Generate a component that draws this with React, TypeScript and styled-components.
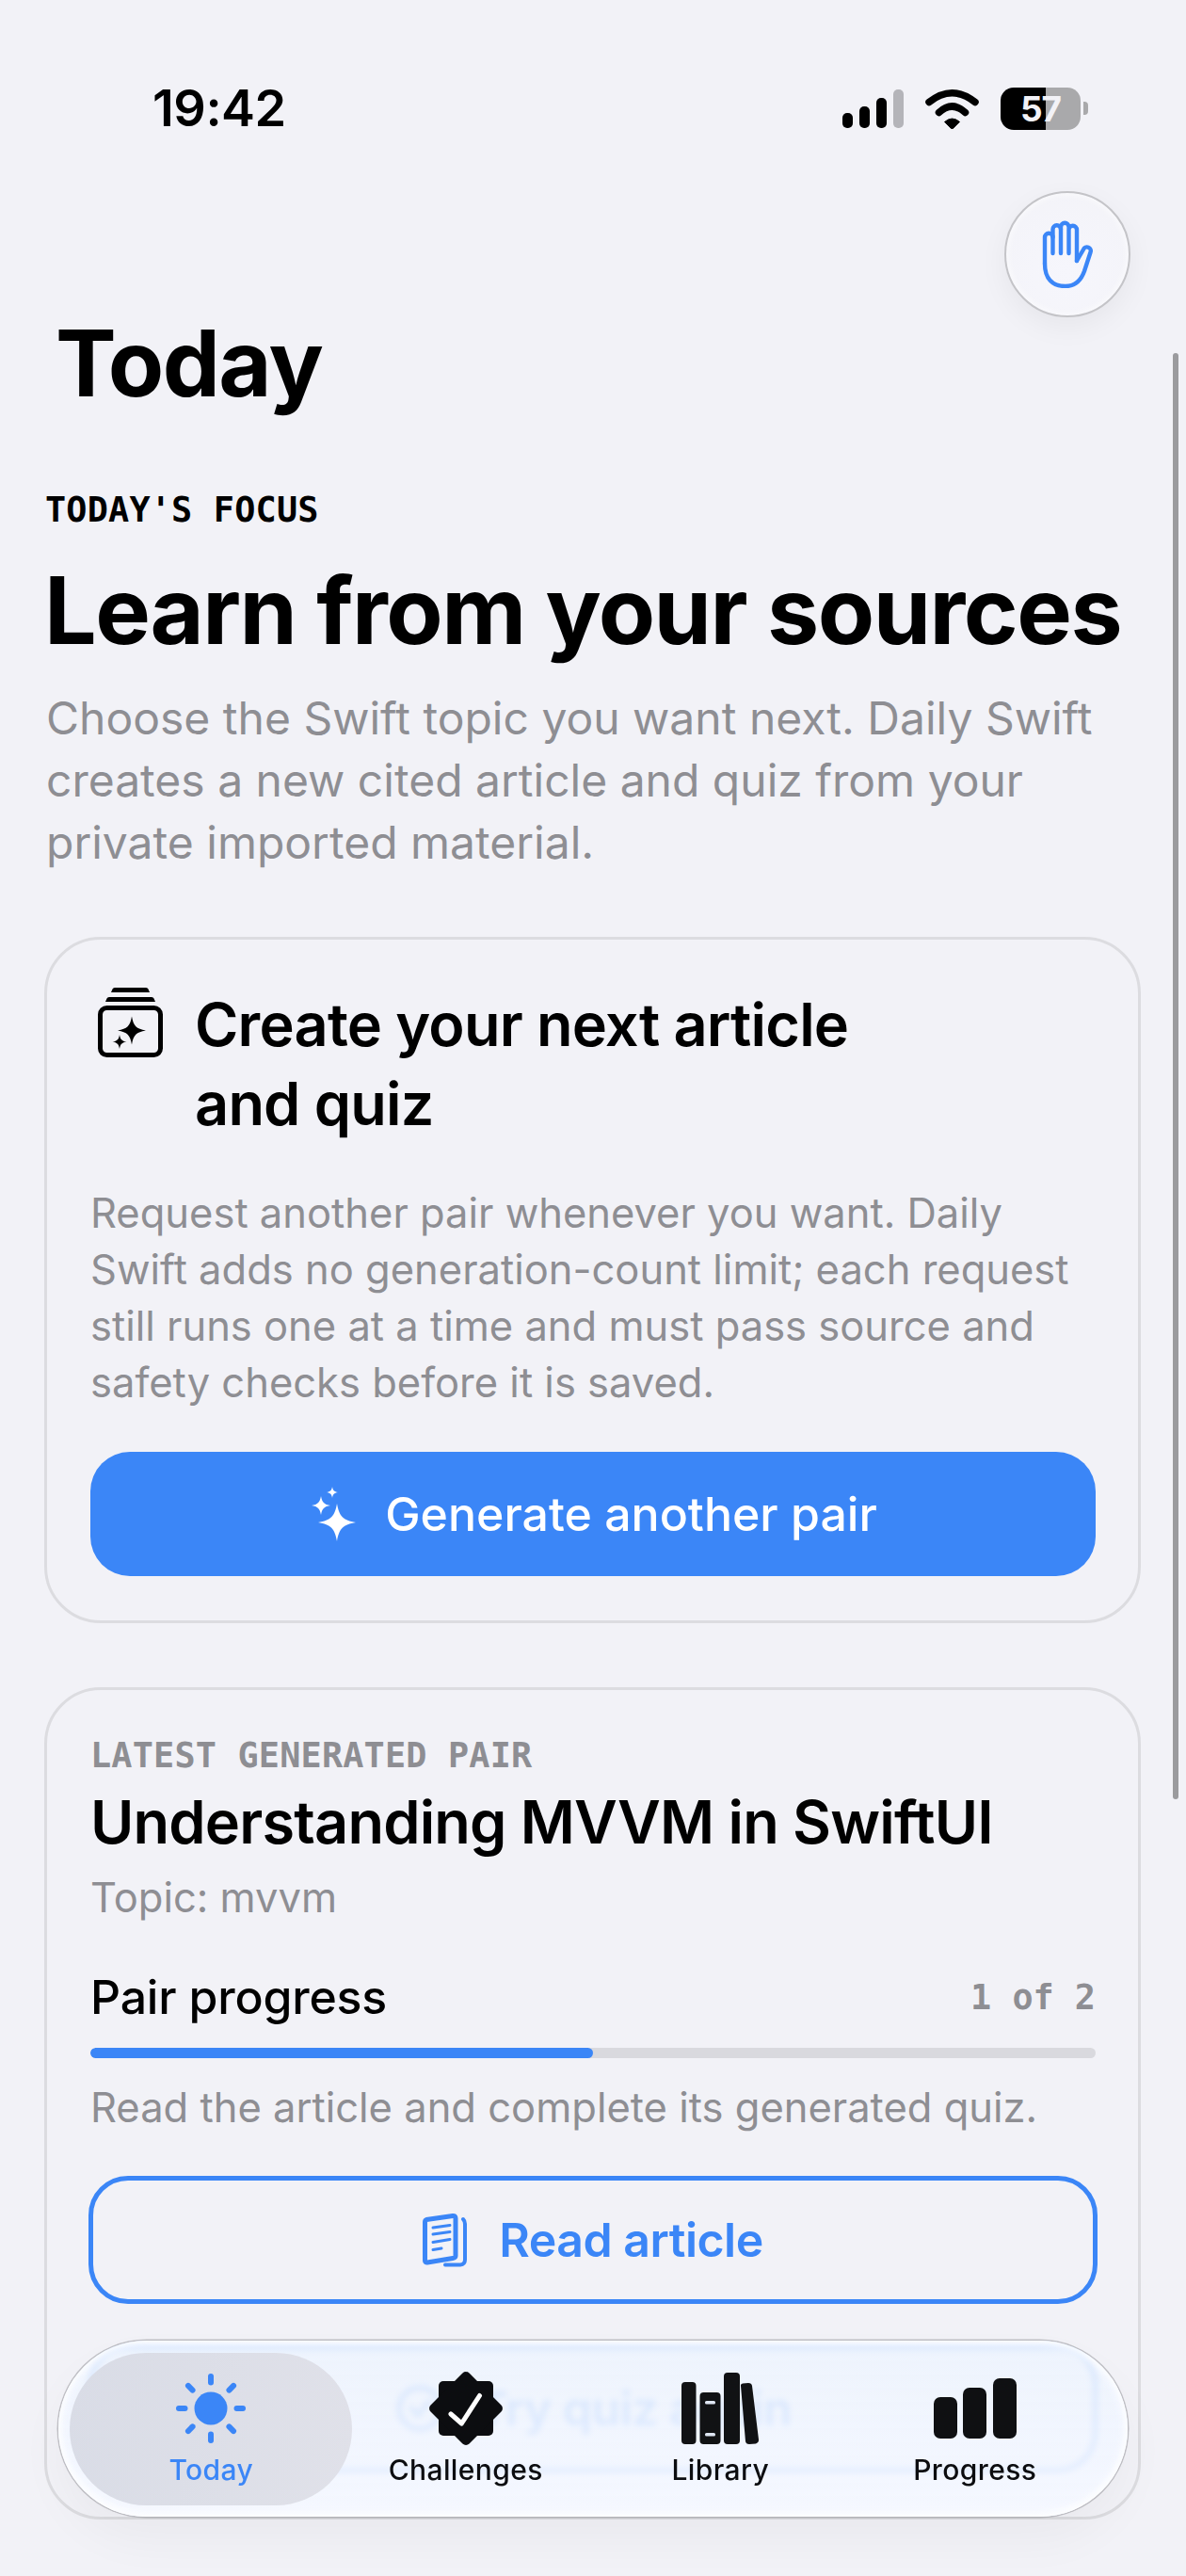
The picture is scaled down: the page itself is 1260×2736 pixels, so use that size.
import React from 'react';
import styled, { createGlobalStyle } from 'styled-components';

const BLUE = '#3b86f7';
const GREY = '#8e8e93';
const MONO = '"DejaVu Sans Mono", "Liberation Mono", monospace';

const GlobalStyle = createGlobalStyle`
	html, body {
		margin: 0;
		padding: 0;
		background: #f2f2f7;
	}
	body {
		font-family: Inter, "Noto Sans", sans-serif;
		-webkit-font-smoothing: antialiased;
	}
`;

const Screen = styled.div`
	position: relative;
	width: 1260px;
	height: 2736px;
	overflow: hidden;
	background: #f2f2f7;
	color: #000;
`;

const StatusBar = styled.header`
	display: flex;
	align-items: center;
	justify-content: space-between;
	height: 62px;
	padding: 84px 104px 0 162px;
`;

const Clock = styled.span`
	font-size: 54px;
	line-height: 62px;
	font-weight: 600;
	letter-spacing: -0.5px;
`;

const StatusIcons = styled.div`
	display: flex;
	align-items: center;
	gap: 23px;
`;

const SignalBars = styled.div`
	display: flex;
	align-items: flex-end;
	gap: 7px;
	height: 42px;
`;

const SignalBar = styled.i<{ $h: number; $off?: boolean }>`
	display: block;
	width: 11px;
	height: ${(p) => p.$h}px;
	border-radius: 5px;
	background: ${(p) => (p.$off ? '#b4b4b9' : '#000')};
`;

const Battery = styled.div`
	display: flex;
	align-items: center;
	gap: 3px;
`;

const BatteryBody = styled.div`
	display: flex;
	align-items: center;
	justify-content: center;
	width: 85px;
	height: 45px;
	border-radius: 14px;
	background: linear-gradient(90deg, #000 0 57%, #a9a9ab 57% 100%);
	color: #f2f2f7;
	font-size: 37px;
	font-weight: 700;
	letter-spacing: -1px;
`;

const BatteryTip = styled.i`
	display: block;
	width: 5px;
	height: 14px;
	border-radius: 0 4px 4px 0;
	background: #a9a9ab;
`;

const HandButton = styled.button`
	position: absolute;
	top: 203px;
	right: 59px;
	display: flex;
	align-items: center;
	justify-content: center;
	width: 134px;
	height: 134px;
	padding: 0;
	border: 2px solid #c4c4c8;
	border-radius: 50%;
	background: radial-gradient(circle at 50% 65%, #f6f6fc 0%, #f3f3f8 100%);
	box-shadow: 0 10px 30px rgba(0, 0, 0, 0.05), inset 0 0 8px rgba(255, 255, 255, 0.9);
`;

const Scrollbar = styled.i`
	position: absolute;
	top: 375px;
	right: 8px;
	width: 6px;
	height: 1536px;
	border-radius: 3px;
	background: rgba(0, 0, 0, 0.36);
`;

const Main = styled.main`
	display: flex;
	flex-direction: column;
	padding: 0 48px 0 47px;
`;

const LargeTitle = styled.h1`
	margin: 180px 0 0 12px;
	font-size: 97px;
	line-height: 120px;
	font-weight: 700;
	letter-spacing: -1.5px;
`;

const Eyebrow = styled.div<{ $muted?: boolean }>`
	font-family: ${MONO};
	font-size: 36.8px;
	line-height: 44px;
	font-weight: 700;
	letter-spacing: 0.2px;
	color: ${(p) => (p.$muted ? GREY : '#000')};
`;

const FocusEyebrow = styled(Eyebrow)`
	margin: 74px 0 0 1px;
`;

const Headline = styled.h2`
	margin: 30px 0 0;
	font-size: 98.6px;
	line-height: 108px;
	font-weight: 700;
	letter-spacing: -1.5px;
	white-space: nowrap;
`;

const Lead = styled.p`
	margin: 28px 0 0 2px;
	font-size: 48px;
	line-height: 66px;
	color: ${GREY};
`;

const Card = styled.section`
	display: flex;
	flex-direction: column;
	margin-top: 67px;
	padding: 48px 45px 47px 46px;
	border: 3px solid #dcdce0;
	border-radius: 60px;
`;

const SecondCard = styled(Card)`
	margin-top: 68px;
	padding-top: 48px;
`;

const CardHeader = styled.div`
	display: flex;
	align-items: flex-start;
	gap: 34px;
	margin-left: 8px;
`;

const HeaderIcon = styled.div`
	margin-top: 3px;
`;

const CardTitle = styled.h3`
	margin: 0;
	font-size: 63px;
	line-height: 84px;
	font-weight: 600;
	letter-spacing: -0.8px;
`;

const CardText = styled.p`
	margin: 44px 0 0;
	font-size: 43.5px;
	line-height: 60px;
	color: ${GREY};
`;

const PrimaryButton = styled.button`
	display: flex;
	align-items: center;
	justify-content: center;
	gap: 30px;
	height: 132px;
	margin-top: 44px;
	padding: 0 0 0 3px;
	border: 0;
	border-radius: 42px;
	background: ${BLUE};
	color: #fff;
	font-family: inherit;
	font-size: 50px;
	font-weight: 500;
`;

const OutlineButton = styled.button`
	display: flex;
	align-items: center;
	justify-content: center;
	gap: 34px;
	height: 136px;
	margin: 0 -2px;
	padding: 0;
	border: 5px solid ${BLUE};
	border-radius: 42px;
	background: transparent;
	color: ${BLUE};
	font-family: inherit;
	font-size: 50px;
	font-weight: 600;
	letter-spacing: -0.5px;
`;

const ReadButton = styled(OutlineButton)`
	margin-top: 43px;
`;

const RetryButton = styled(OutlineButton)`
	margin-top: 43px;
`;

const PairTitle = styled(CardTitle)`
	margin-top: 6px;
`;

const TopicLine = styled.p`
	margin: 8px 0 0;
	font-size: 43.5px;
	line-height: 60px;
	color: ${GREY};
`;

const ProgressRow = styled.div`
	display: flex;
	align-items: center;
	justify-content: space-between;
	margin-top: 44px;
`;

const ProgressLabel = styled.span`
	font-size: 50px;
	line-height: 64px;
	font-weight: 500;
	letter-spacing: -0.2px;
`;

const ProgressCount = styled.span`
	font-family: ${MONO};
	font-size: 36.8px;
	font-weight: 700;
	color: ${GREY};
`;

const Track = styled.div`
	height: 11px;
	margin-top: 22px;
	border-radius: 6px;
	background: #d9d9de;
	overflow: hidden;
`;

const TrackFill = styled.div`
	height: 100%;
	background: ${BLUE};
	border-radius: 6px;
`;

const ProgressHint = styled.p`
	margin: 22px 0 0;
	font-size: 43.5px;
	line-height: 60px;
	color: ${GREY};
`;

const TabBar = styled.nav`
	position: absolute;
	left: 62px;
	top: 2486px;
	display: flex;
	box-sizing: border-box;
	width: 1136px;
	height: 187px;
	padding: 0 27px;
	border-radius: 94px;
	background: linear-gradient(180deg, rgba(236, 243, 254, 0.87), rgba(245, 248, 255, 0.92));
	backdrop-filter: blur(3px);
	box-shadow:
		0 0 0 1.5px rgba(150, 150, 155, 0.55),
		inset 0 0 8px 3px rgba(255, 255, 255, 0.95),
		0 24px 50px rgba(0, 0, 0, 0.04);
`;

const Tab = styled.div<{ $active?: boolean }>`
	position: relative;
	display: flex;
	flex: 1;
	flex-direction: column;
	align-items: center;
	color: ${(p) => (p.$active ? BLUE : '#0c0d10')};

	${(p) =>
		p.$active &&
		`
		&::before {
			content: '';
			position: absolute;
			top: 13px;
			bottom: 12px;
			left: -15px;
			right: -14px;
			border-radius: 81px;
			background: linear-gradient(100deg, #d9dce6, #e0e1e9);
		}
	`}
`;

const TabIcon = styled.div`
	position: relative;
	display: flex;
	align-items: center;
	justify-content: center;
	height: 80px;
	margin-top: 32px;
`;

const TabLabel = styled.span`
	position: relative;
	margin-top: 7px;
	font-size: 30px;
	line-height: 36px;
	font-weight: 500;
	letter-spacing: 0.4px;
`;

const sparklePath = (cx: number, cy: number, r: number) => {
	const a = r * 0.12;
	const b = r * 0.32;
	return `M${cx} ${cy - r}C${cx + a} ${cy - b} ${cx + b} ${cy - a} ${cx + r} ${cy}C${cx + b} ${cy + a} ${cx + a} ${cy + b} ${cx} ${cy + r}C${cx - a} ${cy + b} ${cx - b} ${cy + a} ${cx - r} ${cy}C${cx - b} ${cy - a} ${cx - a} ${cy - b} ${cx} ${cy - r}Z`;
};

function WifiIcon() {
	return (
		<svg width="57" height="43" viewBox="0 0 57 43">
			<path d="M4 14.5Q28.5 -5 53 14.5" fill="none" stroke="#000" strokeWidth="7.5" strokeLinecap="round" />
			<path d="M14.5 25.5Q28.5 12.5 42.5 25.5" fill="none" stroke="#000" strokeWidth="7.5" strokeLinecap="round" />
			<path d="M20.5 35.5Q28.5 28.5 36.5 35.5L29.5 42.5Q28.5 43.2 27.5 42.5Z" fill="#000" stroke="#000" strokeWidth="1" strokeLinejoin="round" />
		</svg>
	);
}

function HandIcon() {
	return (
		<svg width="54" height="72" viewBox="0 0 54 72" fill="none" stroke={BLUE} strokeWidth="4.4" strokeLinecap="round" strokeLinejoin="round">
			<path d="M3 46V18a4.25 4.25 0 0 1 8.5 0" />
			<path d="M11.5 35V9.5a4.25 4.25 0 0 1 8.5 0" />
			<path d="M20 35V7a4.25 4.25 0 0 1 8.5 0" />
			<path d="M28.5 35V10a4.25 4.25 0 0 1 8.5 0V43" />
			<path d="M37 43L44 31a4 4 0 0 1 7.5 3L45 54C41 65 34 70 25 70C11 70 3 62 3 46" />
		</svg>
	);
}

function StackSparkleIcon() {
	return (
		<svg width="69" height="74" viewBox="0 0 69 74">
			<path d="M14 5L15.5 1.5Q16 0 18 0H51Q53 0 53.5 1.5L55 5Z" fill="#000" />
			<path d="M8 15L9.5 11.5Q10 10 12 10H57Q59 10 59.5 11.5L61 15Z" fill="#000" />
			<rect x="2.5" y="21.5" width="64" height="50" rx="7" fill="none" stroke="#000" strokeWidth="5" />
			<path d={sparklePath(36, 45.5, 15)} fill="#000" />
			<path d={sparklePath(23, 57.5, 7.5)} fill="#000" />
		</svg>
	);
}

function SparklesIcon() {
	return (
		<svg width="48" height="58" viewBox="0 0 48 58" fill="#fff">
			<path d={sparklePath(27, 38, 20)} />
			<path d={sparklePath(10, 20, 10)} />
			<path d={sparklePath(22, 6, 6)} />
		</svg>
	);
}

function ArticleIcon() {
	return (
		<svg width="47" height="58" viewBox="0 0 47 58" fill="none" stroke={BLUE} strokeLinecap="round" strokeLinejoin="round">
			<path d="M4 7.5L32 3.5Q35 3.2 35 6V46Q35 48 32 48.5L5 53Q2.5 53.3 2.5 51V10Q2.5 8 4 7.5Z" strokeWidth="5" />
			<path d="M43 7Q45 9 45 12V50Q45 55 40 55.5H24" strokeWidth="4" />
			<path d="M11 16L29 13.5M11 23L29 20.5M11 31.5L29 28.5M11 39.5L20 38" strokeWidth="3" />
		</svg>
	);
}

function RetryIcon() {
	return (
		<svg width="54" height="54" viewBox="0 0 54 54" fill="none" stroke={BLUE} strokeWidth="5" strokeLinecap="round">
			<circle cx="27" cy="27" r="22" />
			<path d="M18 27L25 34L37 20" />
		</svg>
	);
}

function SunIcon() {
	const rays = [0, 45, 90, 135, 180, 225, 270, 315];
	return (
		<svg width="76" height="76" viewBox="-38 -38 76 76" fill={BLUE}>
			<circle r="17.5" />
			{rays.map((angle) => (
				<rect key={angle} x="-3" y="-37" width="6" height="12.5" rx="3" transform={`rotate(${angle})`} />
			))}
		</svg>
	);
}

function BadgeIcon() {
	return (
		<svg width="78" height="78" viewBox="-39 -39 78 78">
			<rect x="-29" y="-29" width="58" height="58" rx="5" fill="#0c0d10" />
			<rect x="-29" y="-29" width="58" height="58" rx="5" fill="#0c0d10" transform="rotate(45)" />
			<path d="M-16 6L-4.6 16L14.5 -13.5" fill="none" stroke="#fff" strokeWidth="5" strokeLinecap="round" strokeLinejoin="round" />
		</svg>
	);
}

function LibraryIcon() {
	return (
		<svg width="82" height="76" viewBox="0 0 82 76" fill="#111214">
			<rect x="0" y="10" width="15.5" height="66" rx="4" />
			<rect x="19.5" y="21" width="22" height="55" rx="4" />
			<rect x="25" y="30" width="11" height="3.6" rx="1.6" fill="#dfe6f2" />
			<rect x="25" y="64" width="11" height="3.6" rx="1.6" fill="#dfe6f2" />
			<rect x="45" y="0" width="17" height="76" rx="4" />
			<path d="M63 14Q62.6 12 65 11.5L71 11Q74.5 11 75 14L82 71Q82.3 75 79 75.5L72 76Q68.5 76 68 73Z" />
		</svg>
	);
}

function BarsIcon() {
	return (
		<svg width="88" height="64" viewBox="0 0 88 64" fill="#0f1012">
			<rect x="0" y="20" width="25" height="44" rx="7" />
			<rect x="31" y="10" width="25" height="54" rx="7" />
			<rect x="63" y="0" width="25" height="64" rx="7" />
		</svg>
	);
}

export default function App() {
	return (
		<Screen>
			<GlobalStyle />
			<StatusBar>
				<Clock>19:42</Clock>
				<StatusIcons>
					<SignalBars>
						<SignalBar $h={16} />
						<SignalBar $h={23} />
						<SignalBar $h={32} />
						<SignalBar $h={41} $off />
					</SignalBars>
					<WifiIcon />
					<Battery>
						<BatteryBody>57</BatteryBody>
						<BatteryTip />
					</Battery>
				</StatusIcons>
			</StatusBar>

			<HandButton aria-label="Stop">
				<HandIcon />
			</HandButton>
			<Scrollbar />

			<Main>
				<LargeTitle>Today</LargeTitle>
				<FocusEyebrow>TODAY'S FOCUS</FocusEyebrow>
				<Headline>Learn from your sources</Headline>
				<Lead>
					Choose the Swift topic you want next. Daily Swift creates a new cited article and quiz from your private imported material.
				</Lead>

				<Card>
					<CardHeader>
						<HeaderIcon>
							<StackSparkleIcon />
						</HeaderIcon>
						<CardTitle>
							Create your next article
							<br />
							and quiz
						</CardTitle>
					</CardHeader>
					<CardText>
						Request another pair whenever you want. Daily Swift adds no generation-count limit; each request still runs one at a time and must pass source and safety checks before it is saved.
					</CardText>
					<PrimaryButton>
						<SparklesIcon />
						Generate another pair
					</PrimaryButton>
				</Card>

				<SecondCard>
					<Eyebrow $muted>LATEST GENERATED PAIR</Eyebrow>
					<PairTitle>Understanding MVVM in SwiftUI</PairTitle>
					<TopicLine>Topic: mvvm</TopicLine>
					<ProgressRow>
						<ProgressLabel>Pair progress</ProgressLabel>
						<ProgressCount>1 of 2</ProgressCount>
					</ProgressRow>
					<Track>
						<TrackFill style={{ width: '50%' }} />
					</Track>
					<ProgressHint>Read the article and complete its generated quiz.</ProgressHint>
					<ReadButton>
						<ArticleIcon />
						Read article
					</ReadButton>
					<RetryButton>
						<RetryIcon />
						Try quiz again
					</RetryButton>
				</SecondCard>
			</Main>

			<TabBar>
				<Tab $active>
					<TabIcon>
						<SunIcon />
					</TabIcon>
					<TabLabel>Today</TabLabel>
				</Tab>
				<Tab>
					<TabIcon>
						<BadgeIcon />
					</TabIcon>
					<TabLabel>Challenges</TabLabel>
				</Tab>
				<Tab>
					<TabIcon>
						<LibraryIcon />
					</TabIcon>
					<TabLabel>Library</TabLabel>
				</Tab>
				<Tab>
					<TabIcon>
						<BarsIcon />
					</TabIcon>
					<TabLabel>Progress</TabLabel>
				</Tab>
			</TabBar>
		</Screen>
	);
}
